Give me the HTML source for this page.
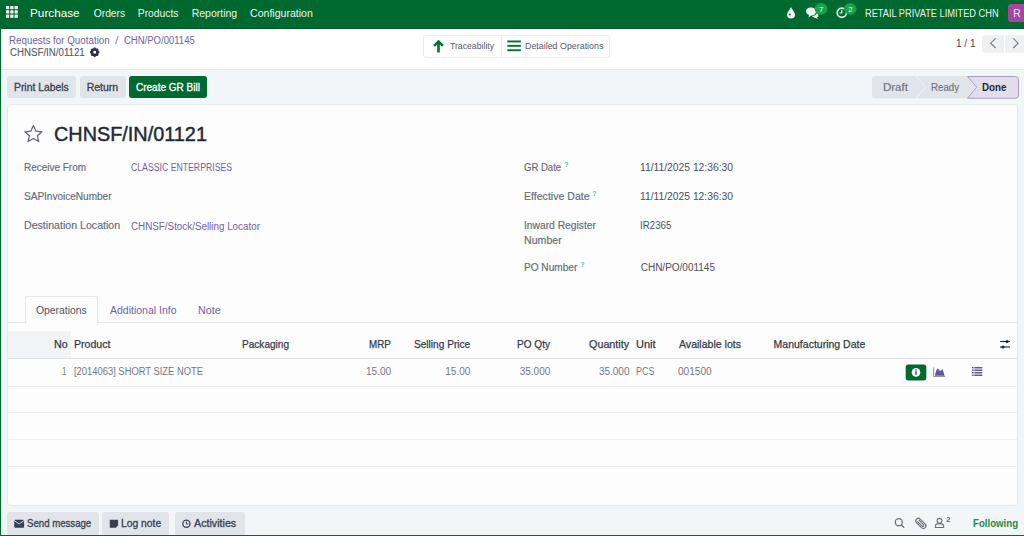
<!DOCTYPE html>
<html><head><meta charset="utf-8"><style>
html,body{margin:0;padding:0;}
body{width:1024px;height:536px;position:relative;overflow:hidden;background:#f3f6f8;font-family:"Liberation Sans",sans-serif;}
.t{position:absolute;white-space:nowrap;transform-origin:0 0;}
.b{position:absolute;box-sizing:border-box;}
svg{position:absolute;overflow:visible;}
</style></head><body>
<!-- navbar -->
<div class="b" style="left:0;top:0;width:1024px;height:29px;background:#00692f;border-bottom:1px solid #005524;"></div>
<!-- grid icon -->
<svg style="left:0;top:0" width="30" height="30">
<g fill="#f4f8f5">
<rect x="6" y="6" width="3.2" height="3.2"/><rect x="10.3" y="6" width="3.2" height="3.2"/><rect x="14.6" y="6" width="3.2" height="3.2"/>
<rect x="6" y="10.3" width="3.2" height="3.2"/><rect x="10.3" y="10.3" width="3.2" height="3.2"/><rect x="14.6" y="10.3" width="3.2" height="3.2"/>
<rect x="6" y="14.6" width="3.2" height="3.2"/><rect x="10.3" y="14.6" width="3.2" height="3.2"/><rect x="14.6" y="14.6" width="3.2" height="3.2"/>
</g></svg>
<!-- navbar right icons -->
<svg style="left:0;top:0" width="1024" height="30">
<path d="M791 7 C792.5 10 795 12.5 795 14.5 A4 4 0 0 1 787 14.5 C787 12.5 789.5 10 791 7Z" fill="#f4f8f5"/>
<circle cx="789.8" cy="14.5" r="1" fill="#00692f"/>
<path d="M806 11.5 C806 9 808.5 7.5 811 7.5 C813.5 7.5 816 9 816 11.5 C816 14 813.5 15.5 811 15.5 L808.5 17.5 L809 15 C807 14.3 806 13 806 11.5Z" fill="#f4f8f5"/>
<path d="M812 16 C814 16 816.5 15 817 13 C818 13.8 818.5 14.5 818.5 15.5 C818.5 16.5 818 17 817 17.5 L818 19 L815 17.8 C814 17.8 813 17 812 16Z" fill="#f4f8f5"/>
<ellipse cx="821" cy="8.8" rx="6.5" ry="5.9" fill="#16a34a"/>
<circle cx="841.8" cy="12.7" r="4.6" fill="none" stroke="#f4f8f5" stroke-width="1.6"/>
<path d="M841.8 10 V13 H839.5" fill="none" stroke="#f4f8f5" stroke-width="1.2"/>
<ellipse cx="850.2" cy="8.8" rx="6.3" ry="5.9" fill="#16a34a"/>
</svg>
<div class="t" style="left:819px;top:4.5px;font-size:7.5px;line-height:9px;color:#fff;">7</div>
<div class="t" style="left:848.2px;top:4.5px;font-size:7.5px;line-height:9px;color:#fff;">2</div>
<div class="b" style="left:1008px;top:4px;width:20px;height:17.6px;background:#a5479f;border-radius:3px;"></div>
<div class="t" style="left:1013.3px;top:7.5px;font-size:10.2px;line-height:11px;color:#f6eef6;">R</div>
<!-- control panel -->
<div class="b" style="left:0;top:29px;width:1024px;height:41px;background:#ffffff;border-bottom:1px solid #e6e9ec;"></div>
<svg style="left:0;top:0" width="1024" height="70">
<g transform="translate(94.7,52.2)">
<circle r="2.7" fill="none" stroke="#2b3240" stroke-width="2.5"/>
<g fill="#2b3240">
<rect x="-1" y="-4.7" width="2" height="2"/><rect x="-1" y="2.7" width="2" height="2"/>
<rect x="-4.7" y="-1" width="2" height="2"/><rect x="2.7" y="-1" width="2" height="2"/>
<g transform="rotate(45)"><rect x="-1" y="-4.7" width="2" height="2"/><rect x="-1" y="2.7" width="2" height="2"/>
<rect x="-4.7" y="-1" width="2" height="2"/><rect x="2.7" y="-1" width="2" height="2"/></g>
</g>
</g>
</svg>
<div class="b" style="left:423px;top:35px;width:187px;height:23px;border:1px solid #eaecef;border-radius:3px;background:#fff;"></div>
<div class="b" style="left:501px;top:35px;width:1px;height:23px;background:#eaecef;"></div>
<svg style="left:0;top:0" width="1024" height="70">
<path d="M438.5 39.8 L443.8 45 L442.1 46.7 L439.8 44.4 V52.4 H437.2 V44.4 L434.9 46.7 L433.2 45 Z" fill="#04702f"/>
<g fill="#04702f"><rect x="507.3" y="40.5" width="13.6" height="1.9"/><rect x="507.3" y="44.9" width="13.6" height="1.9"/><rect x="507.3" y="49.3" width="13.6" height="1.9"/></g>
</svg>
<div class="b" style="left:982px;top:35px;width:22px;height:17.6px;background:#eef0f2;border-radius:3px 0 0 3px;"></div>
<div class="b" style="left:1005px;top:35px;width:22px;height:17.6px;background:#eef0f2;"></div>
<svg style="left:0;top:0" width="1024" height="70">
<path d="M995.6 38.4 L990.6 43.2 L995.6 48" fill="none" stroke="#767a84" stroke-width="1.1"/>
<path d="M1013.2 38.4 L1018.2 43.2 L1013.2 48" fill="none" stroke="#767a84" stroke-width="1.1"/>
</svg>
<!-- action bar buttons -->
<div class="b" style="left:7px;top:76px;width:69px;height:22px;background:#e1e4e8;border-radius:3px;"></div>
<div class="b" style="left:80px;top:76px;width:46px;height:22px;background:#e1e4e8;border-radius:3px;"></div>
<div class="b" style="left:129px;top:76px;width:78px;height:22px;background:#00692f;border-radius:3px;"></div>
<!-- status bar -->
<svg style="left:0;top:0" width="1024" height="110">
<path d="M875 76 H967 L976.7 87.2 L967 98.3 H875 A3 3 0 0 1 872 95.3 V79 A3 3 0 0 1 875 76Z" fill="#e1e4e8"/>
<path d="M916 76 L925.5 87.2 L916 98.3" fill="none" stroke="#f3f6f8" stroke-width="1"/>
<path d="M967.5 76.5 H1015.5 A3 3 0 0 1 1018.5 79.5 V95.3 A3 3 0 0 1 1015.5 98.3 H967.5 L976.7 87.2 Z" fill="#e1dde9" stroke="#a093c0" stroke-width="0.9"/>
</svg>
<!-- sheet -->
<div class="b" style="left:7px;top:104px;width:1011px;height:402px;background:#fdfdfd;border:1px solid #e6eaed;border-radius:4px;"></div>
<svg style="left:0;top:0" width="1024" height="536">
<path d="M33.4 125.5 L36 131.2 L42 131.8 L37.4 135.8 L38.8 141.6 L33.4 138.6 L28 141.6 L29.4 135.8 L24.8 131.8 L30.8 131.2 Z" fill="none" stroke="#5f6370" stroke-width="1.2" stroke-linejoin="round"/>
</svg>
<!-- help ? -->
<div class="t" style="left:564.6px;top:161px;font-size:6.5px;line-height:8px;color:#5cb4bf;font-weight:700">?</div>
<div class="t" style="left:592.4px;top:189.5px;font-size:6.5px;line-height:8px;color:#5cb4bf;font-weight:700">?</div>
<div class="t" style="left:580.4px;top:260.5px;font-size:6.5px;line-height:8px;color:#5cb4bf;font-weight:700">?</div>
<!-- tabs -->
<div class="b" style="left:8px;top:322px;width:1009px;height:1px;background:#e3e6ea;"></div>
<div class="b" style="left:24.5px;top:296px;width:73.5px;height:27px;background:#fdfdfd;border:1px solid #e3e6ea;border-bottom:none;border-radius:3px 3px 0 0;"></div>
<!-- table -->
<div class="b" style="left:8px;top:331px;width:63px;height:27px;background:#f1f3f5;"></div>
<div class="b" style="left:8px;top:358px;width:1009px;height:1px;background:#dde1e6;"></div>
<div class="b" style="left:8px;top:386px;width:1009px;height:1px;background:#eceef1;"></div>
<div class="b" style="left:8px;top:412px;width:1009px;height:1px;background:#eceef1;"></div>
<div class="b" style="left:8px;top:439px;width:1009px;height:1px;background:#eceef1;"></div>
<div class="b" style="left:8px;top:466px;width:1009px;height:1px;background:#eceef1;"></div>
<svg style="left:0;top:0" width="1024" height="536">
<g stroke="#1f2937" stroke-width="1.1"><line x1="1000" y1="341.5" x2="1010" y2="341.5"/><line x1="1000" y1="347" x2="1010" y2="347"/></g>
<circle cx="1007" cy="341.5" r="1.6" fill="#1f2937"/><circle cx="1003" cy="347" r="1.6" fill="#1f2937"/>
<rect x="905.7" y="364.4" width="20.6" height="16" rx="2.5" fill="#00692f"/>
<circle cx="916" cy="372.4" r="4.3" fill="#fff"/>
<rect x="915.3" y="371.2" width="1.4" height="3.6" fill="#00692f"/><rect x="915.3" y="369.2" width="1.4" height="1.3" fill="#00692f"/>
<path d="M933.6 367.5 V376.5 H945.2" fill="none" stroke="#8a83b0" stroke-width="0.9"/>
<path d="M934.8 375.8 L936.2 370.5 L937.8 368.2 L940 371.2 L942.6 369.3 L944.6 375.8 Z" fill="#5e5a8e"/>
<g fill="#5e5a8e"><rect x="972" y="367" width="1.6" height="1.5"/><rect x="974.3" y="367" width="8" height="1.5"/>
<rect x="972" y="369.5" width="1.6" height="1.5"/><rect x="974.3" y="369.5" width="8" height="1.5"/>
<rect x="972" y="372" width="1.6" height="1.5"/><rect x="974.3" y="372" width="8" height="1.5"/>
<rect x="972" y="374.5" width="1.6" height="1.5"/><rect x="974.3" y="374.5" width="8" height="1.5"/></g>
</svg>
<!-- chatter -->
<div class="b" style="left:7px;top:512px;width:92px;height:24px;background:#e1e4e8;border-radius:3px;"></div>
<div class="b" style="left:102px;top:512px;width:67px;height:24px;background:#e1e4e8;border-radius:3px;"></div>
<div class="b" style="left:175px;top:512px;width:70px;height:24px;background:#e1e4e8;border-radius:3px;"></div>
<svg style="left:0;top:0" width="1024" height="536">
<rect x="14.2" y="519.7" width="9.9" height="8" rx="1" fill="#374151"/>
<path d="M14.2 520.5 L19.15 524 L24.1 520.5" fill="none" stroke="#e1e4e8" stroke-width="0.9"/>
<path d="M109.8 519.7 H118.1 V525.5 L115.8 527.8 H109.8Z" fill="#374151"/>
<circle cx="186.4" cy="523.7" r="3.6" fill="none" stroke="#374151" stroke-width="1.3"/>
<path d="M186.4 521.5 V524 H188.2" fill="none" stroke="#374151" stroke-width="1"/>
<circle cx="898.8" cy="522.2" r="3.5" fill="none" stroke="#6b6f7a" stroke-width="1.3"/>
<line x1="901.3" y1="524.8" x2="904.2" y2="527.8" stroke="#6b6f7a" stroke-width="1.4"/>
<g transform="translate(920.9,523.4) rotate(-45)" fill="none" stroke="#6b6f7a" stroke-width="1.1"><rect x="-2.6" y="-6.1" width="5.2" height="12.2" rx="2.6"/><path d="M-1 -4 V2.8 A1 1 0 0 0 1 2.8 V-4"/></g>
<circle cx="939.5" cy="520.8" r="2.4" fill="none" stroke="#6b6f7a" stroke-width="1.1"/>
<path d="M935.3 527.5 V526.2 C935.3 524.6 937 523.6 939.5 523.6 C942 523.6 943.7 524.6 943.7 526.2 V527.5 Z" fill="none" stroke="#6b6f7a" stroke-width="1.1" stroke-linejoin="round"/>
</svg>
<div class="t" style="left:946.3px;top:516px;font-size:7.5px;line-height:8px;color:#5f6370;font-weight:700">2</div>
<!-- window border -->
<div class="b" style="left:0;top:0;width:1px;height:536px;background:#00692f;"></div>
<div class="b" style="left:0;top:535px;width:1024px;height:1px;background:#00692f;"></div>

<span class="t" style="left:30.06px;top:6.00px;font-size:11.73px;line-height:13px;color:#ffffff;font-weight:400;">Purchase</span>
<span class="t" style="left:93.69px;top:7.50px;font-size:10.31px;line-height:11px;color:#eef3ef;font-weight:400;">Orders</span>
<span class="t" style="left:137.77px;top:7.50px;font-size:10.32px;line-height:11px;color:#eef3ef;font-weight:400;">Products</span>
<span class="t" style="left:191.66px;top:6.50px;font-size:10.50px;line-height:12px;color:#eef3ef;font-weight:400;">Reporting</span>
<span class="t" style="left:250.07px;top:6.50px;font-size:10.56px;line-height:12px;color:#eef3ef;font-weight:400;">Configuration</span>
<span class="t" style="left:865.36px;top:7.50px;font-size:10.00px;line-height:11px;color:#eef3ef;font-weight:400;transform:scaleX(0.9234);">RETAIL PRIVATE LIMITED CHN</span>
<span class="t" style="left:9.22px;top:35.00px;font-size:10.00px;line-height:11px;color:#71639e;font-weight:400;transform:scaleX(0.9795);">Requests for Quotation</span>
<span class="t" style="left:115.20px;top:35.00px;font-size:10.00px;line-height:11px;color:#8a8d96;font-weight:400;transform:scaleX(1.2857);">/</span>
<span class="t" style="left:124.32px;top:35.00px;font-size:10.00px;line-height:11px;color:#71639e;font-weight:400;transform:scaleX(0.9519);">CHN/PO/001145</span>
<span class="t" style="left:9.62px;top:47.00px;font-size:10.00px;line-height:11px;color:#555a66;font-weight:400;-webkit-text-stroke:0.1px #555a66;transform:scaleX(0.9697);">CHNSF/IN/01121</span>
<span class="t" style="left:449.83px;top:41.00px;font-size:9.00px;line-height:10px;color:#555a66;font-weight:400;transform:scaleX(0.9648);">Traceability</span>
<span class="t" style="left:524.79px;top:41.00px;font-size:9.00px;line-height:10px;color:#555a66;font-weight:400;transform:scaleX(0.9853);">Detailed Operations</span>
<span class="t" style="left:956.10px;top:38.00px;font-size:10.20px;line-height:11px;color:#3d4452;font-weight:400;transform:scaleX(0.9806);">1 / 1</span>
<span class="t" style="left:13.97px;top:81.00px;font-size:10.50px;line-height:12px;color:#374151;font-weight:400;-webkit-text-stroke:0.3px #374151;transform:scaleX(0.9872);">Print Labels</span>
<span class="t" style="left:86.66px;top:81.00px;font-size:10.50px;line-height:12px;color:#374151;font-weight:400;-webkit-text-stroke:0.3px #374151;">Return</span>
<span class="t" style="left:136.40px;top:81.00px;font-size:10.50px;line-height:12px;color:#ffffff;font-weight:400;-webkit-text-stroke:0.3px #ffffff;transform:scaleX(0.9526);">Create GR Bill</span>
<span class="t" style="left:882.73px;top:81.00px;font-size:10.50px;line-height:12px;color:#6e727c;font-weight:400;-webkit-text-stroke:0.15px #6e727c;transform:scaleX(1.0918);">Draft</span>
<span class="t" style="left:930.67px;top:81.00px;font-size:10.50px;line-height:12px;color:#6e727c;font-weight:400;-webkit-text-stroke:0.15px #6e727c;transform:scaleX(0.9251);">Ready</span>
<span class="t" style="left:981.81px;top:82.00px;font-size:10.30px;line-height:11px;color:#1f2937;font-weight:700;transform:scaleX(0.9492);">Done</span>
<span class="t" style="left:54.26px;top:123.00px;font-size:20.00px;line-height:22px;color:#1f2937;font-weight:400;-webkit-text-stroke:0.45px #1f2937;transform:scaleX(0.9921);">CHNSF/IN/01121</span>
<span class="t" style="left:23.75px;top:162.00px;font-size:10.00px;line-height:11px;color:#656a75;font-weight:400;-webkit-text-stroke:0.15px #656a75;transform:scaleX(0.9966);">Receive From</span>
<span class="t" style="left:24.15px;top:191.20px;font-size:10.00px;line-height:11px;color:#656a75;font-weight:400;-webkit-text-stroke:0.15px #656a75;transform:scaleX(1.0031);">SAPInvoiceNumber</span>
<span class="t" style="left:23.70px;top:220.40px;font-size:10.00px;line-height:11px;color:#656a75;font-weight:400;-webkit-text-stroke:0.15px #656a75;transform:scaleX(1.0610);">Destination Location</span>
<span class="t" style="left:131.06px;top:162.20px;font-size:10.00px;line-height:11px;color:#71639e;font-weight:400;transform:scaleX(0.8701);">CLASSIC ENTERPRISES</span>
<span class="t" style="left:131.01px;top:220.50px;font-size:10.00px;line-height:11px;color:#71639e;font-weight:400;transform:scaleX(0.9829);">CHNSF/Stock/Selling Locator</span>
<span class="t" style="left:524.07px;top:162.00px;font-size:10.00px;line-height:11px;color:#656a75;font-weight:400;-webkit-text-stroke:0.15px #656a75;transform:scaleX(0.9543);">GR Date</span>
<span class="t" style="left:523.70px;top:191.20px;font-size:10.00px;line-height:11px;color:#656a75;font-weight:400;-webkit-text-stroke:0.15px #656a75;transform:scaleX(1.0573);">Effective Date</span>
<span class="t" style="left:523.63px;top:220.10px;font-size:10.00px;line-height:11px;color:#656a75;font-weight:400;-webkit-text-stroke:0.15px #656a75;transform:scaleX(1.0261);">Inward Register</span>
<span class="t" style="left:523.70px;top:235.00px;font-size:10.00px;line-height:11px;color:#656a75;font-weight:400;-webkit-text-stroke:0.15px #656a75;transform:scaleX(1.0625);">Number</span>
<span class="t" style="left:523.74px;top:262.30px;font-size:10.00px;line-height:11px;color:#656a75;font-weight:400;-webkit-text-stroke:0.15px #656a75;transform:scaleX(1.0084);">PO Number</span>
<span class="t" style="left:640.48px;top:162.00px;font-size:10.00px;line-height:11px;color:#4a505c;font-weight:400;transform:scaleX(1.0302);">11/11/2025 12:36:30</span>
<span class="t" style="left:640.48px;top:191.20px;font-size:10.00px;line-height:11px;color:#4a505c;font-weight:400;transform:scaleX(1.0302);">11/11/2025 12:36:30</span>
<span class="t" style="left:640.32px;top:220.00px;font-size:10.00px;line-height:11px;color:#4a505c;font-weight:400;transform:scaleX(0.9747);">IR2365</span>
<span class="t" style="left:640.70px;top:262.30px;font-size:10.00px;line-height:11px;color:#4a505c;font-weight:400;">CHN/PO/001145</span>
<span class="t" style="left:35.89px;top:305.00px;font-size:10.00px;line-height:11px;color:#4b5161;font-weight:400;transform:scaleX(1.0349);">Operations</span>
<span class="t" style="left:109.70px;top:305.00px;font-size:10.00px;line-height:11px;color:#71639e;font-weight:400;transform:scaleX(1.0489);">Additional Info</span>
<span class="t" style="left:198.33px;top:305.00px;font-size:10.00px;line-height:11px;color:#71639e;font-weight:400;transform:scaleX(1.0821);">Note</span>
<span class="t" style="left:54.00px;top:337.50px;font-size:10.50px;line-height:12px;color:#343b48;font-weight:400;-webkit-text-stroke:0.25px #343b48;transform:scaleX(1.0162);">No</span>
<span class="t" style="left:73.90px;top:337.50px;font-size:10.50px;line-height:12px;color:#343b48;font-weight:400;-webkit-text-stroke:0.25px #343b48;transform:scaleX(1.0065);">Product</span>
<span class="t" style="left:241.64px;top:337.50px;font-size:10.50px;line-height:12px;color:#343b48;font-weight:400;-webkit-text-stroke:0.25px #343b48;transform:scaleX(0.9600);">Packaging</span>
<span class="t" style="left:369.17px;top:337.50px;font-size:10.50px;line-height:12px;color:#343b48;font-weight:400;-webkit-text-stroke:0.25px #343b48;transform:scaleX(0.9318);">MRP</span>
<span class="t" style="left:413.95px;top:337.50px;font-size:10.50px;line-height:12px;color:#343b48;font-weight:400;-webkit-text-stroke:0.25px #343b48;transform:scaleX(0.9625);">Selling Price</span>
<span class="t" style="left:516.64px;top:337.50px;font-size:10.50px;line-height:12px;color:#343b48;font-weight:400;-webkit-text-stroke:0.25px #343b48;transform:scaleX(0.9588);">PO Qty</span>
<span class="t" style="left:588.82px;top:337.50px;font-size:10.50px;line-height:12px;color:#343b48;font-weight:400;-webkit-text-stroke:0.25px #343b48;transform:scaleX(1.0263);">Quantity</span>
<span class="t" style="left:635.98px;top:337.50px;font-size:10.50px;line-height:12px;color:#343b48;font-weight:400;-webkit-text-stroke:0.25px #343b48;transform:scaleX(1.0468);">Unit</span>
<span class="t" style="left:678.95px;top:337.50px;font-size:10.50px;line-height:12px;color:#343b48;font-weight:400;-webkit-text-stroke:0.25px #343b48;transform:scaleX(1.0055);">Available lots</span>
<span class="t" style="left:773.61px;top:337.50px;font-size:10.50px;line-height:12px;color:#343b48;font-weight:400;-webkit-text-stroke:0.25px #343b48;">Manufacturing Date</span>
<span class="t" style="left:62.44px;top:365.50px;font-size:10.00px;line-height:11px;color:#737885;font-weight:400;transform:scaleX(0.7955);">1</span>
<span class="t" style="left:74.24px;top:365.50px;font-size:10.00px;line-height:11px;color:#737885;font-weight:400;transform:scaleX(0.9387);">[2014063] SHORT SIZE NOTE</span>
<span class="t" style="left:365.90px;top:365.50px;font-size:10.00px;line-height:11px;color:#737885;font-weight:400;transform:scaleX(1.0057);">15.00</span>
<span class="t" style="left:445.30px;top:365.50px;font-size:10.00px;line-height:11px;color:#737885;font-weight:400;">15.00</span>
<span class="t" style="left:519.70px;top:365.50px;font-size:10.00px;line-height:11px;color:#737885;font-weight:400;">35.000</span>
<span class="t" style="left:598.90px;top:365.50px;font-size:10.00px;line-height:11px;color:#737885;font-weight:400;">35.000</span>
<span class="t" style="left:635.79px;top:365.50px;font-size:10.00px;line-height:11px;color:#737885;font-weight:400;transform:scaleX(0.8921);">PCS</span>
<span class="t" style="left:678.40px;top:365.50px;font-size:10.00px;line-height:11px;color:#737885;font-weight:400;transform:scaleX(1.0089);">001500</span>
<span class="t" style="left:27.21px;top:518.00px;font-size:10.30px;line-height:11px;color:#374151;font-weight:400;-webkit-text-stroke:0.3px #374151;transform:scaleX(0.9348);">Send message</span>
<span class="t" style="left:121.08px;top:518.00px;font-size:10.30px;line-height:11px;color:#374151;font-weight:400;-webkit-text-stroke:0.3px #374151;">Log note</span>
<span class="t" style="left:194.20px;top:518.00px;font-size:10.30px;line-height:11px;color:#374151;font-weight:400;-webkit-text-stroke:0.3px #374151;transform:scaleX(1.0390);">Activities</span>
<span class="t" style="left:972.92px;top:518.00px;font-size:10.30px;line-height:11px;color:#1f8a45;font-weight:700;transform:scaleX(0.9378);">Following</span>
</body></html>
